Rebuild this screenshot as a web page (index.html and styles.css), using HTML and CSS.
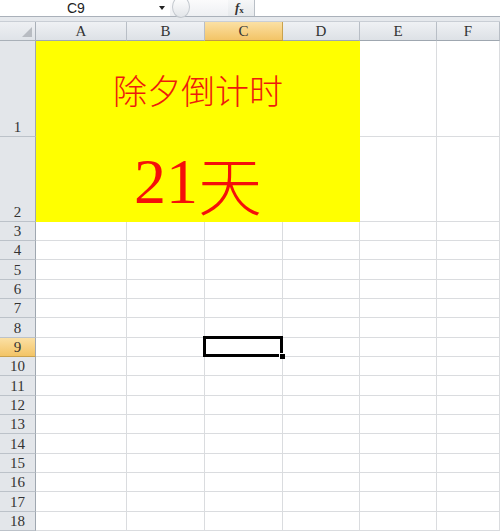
FILE: index.html
```html
<!DOCTYPE html>
<html lang="zh-CN">
<head>
    <meta charset="UTF-8">
    <title>除夕倒计时</title>
    <link rel="stylesheet" href="styles.css">
</head>
<body>
    <div class="formula-bar">
        <div class="name-box">
            <span class="name-text">C9</span>
            <span class="name-arrow"></span>
        </div>
        <div class="splitter"><span class="knob"></span></div>
        <div class="fx-btn"><i>f</i><sub>x</sub></div>
        <div class="formula-input"></div>
    </div>
    <div class="band"></div>

    <div class="sheet">
        <div class="row head-row">
            <div class="corner">
                <svg width="10" height="10" viewBox="0 0 10 10"><polygon points="10,0 10,10 0,10" fill="#b8bcc2"/></svg>
            </div>
            <div class="col-head">A</div>
            <div class="col-head">B</div>
            <div class="col-head active">C</div>
            <div class="col-head">D</div>
            <div class="col-head">E</div>
            <div class="col-head">F</div>
        </div>

        <div class="row row-1">
            <div class="row-head">1</div>
            <div class="merged title">除夕倒计时</div>
            <div class="cell"></div>
            <div class="cell"></div>
        </div>
        <div class="row row-2">
            <div class="row-head">2</div>
            <div class="merged days"><span class="num">21</span>天</div>
            <div class="cell"></div>
            <div class="cell"></div>
        </div>

        <div class="row r19"><div class="row-head">3</div><div class="cell"></div><div class="cell"></div><div class="cell"></div><div class="cell"></div><div class="cell"></div><div class="cell"></div></div>
        <div class="row r19"><div class="row-head">4</div><div class="cell"></div><div class="cell"></div><div class="cell"></div><div class="cell"></div><div class="cell"></div><div class="cell"></div></div>
        <div class="row r20"><div class="row-head">5</div><div class="cell"></div><div class="cell"></div><div class="cell"></div><div class="cell"></div><div class="cell"></div><div class="cell"></div></div>
        <div class="row r19"><div class="row-head">6</div><div class="cell"></div><div class="cell"></div><div class="cell"></div><div class="cell"></div><div class="cell"></div><div class="cell"></div></div>
        <div class="row r19"><div class="row-head">7</div><div class="cell"></div><div class="cell"></div><div class="cell"></div><div class="cell"></div><div class="cell"></div><div class="cell"></div></div>
        <div class="row r20"><div class="row-head">8</div><div class="cell"></div><div class="cell"></div><div class="cell"></div><div class="cell"></div><div class="cell"></div><div class="cell"></div></div>
        <div class="row r19"><div class="row-head active">9</div><div class="cell"></div><div class="cell"></div><div class="cell selected"><span class="handle"></span></div><div class="cell"></div><div class="cell"></div><div class="cell"></div></div>
        <div class="row r19"><div class="row-head">10</div><div class="cell"></div><div class="cell"></div><div class="cell"></div><div class="cell"></div><div class="cell"></div><div class="cell"></div></div>
        <div class="row r20"><div class="row-head">11</div><div class="cell"></div><div class="cell"></div><div class="cell"></div><div class="cell"></div><div class="cell"></div><div class="cell"></div></div>
        <div class="row r19"><div class="row-head">12</div><div class="cell"></div><div class="cell"></div><div class="cell"></div><div class="cell"></div><div class="cell"></div><div class="cell"></div></div>
        <div class="row r19"><div class="row-head">13</div><div class="cell"></div><div class="cell"></div><div class="cell"></div><div class="cell"></div><div class="cell"></div><div class="cell"></div></div>
        <div class="row r20"><div class="row-head">14</div><div class="cell"></div><div class="cell"></div><div class="cell"></div><div class="cell"></div><div class="cell"></div><div class="cell"></div></div>
        <div class="row r19"><div class="row-head">15</div><div class="cell"></div><div class="cell"></div><div class="cell"></div><div class="cell"></div><div class="cell"></div><div class="cell"></div></div>
        <div class="row r19"><div class="row-head">16</div><div class="cell"></div><div class="cell"></div><div class="cell"></div><div class="cell"></div><div class="cell"></div><div class="cell"></div></div>
        <div class="row r20"><div class="row-head">17</div><div class="cell"></div><div class="cell"></div><div class="cell"></div><div class="cell"></div><div class="cell"></div><div class="cell"></div></div>
        <div class="row r19"><div class="row-head">18</div><div class="cell"></div><div class="cell"></div><div class="cell"></div><div class="cell"></div><div class="cell"></div><div class="cell"></div></div>
    </div>
</body>
</html>
```

FILE: styles.css
```css
body {
    margin: 0;
    padding: 0;
    width: 500px;
    height: 532px;
    overflow: hidden;
    background-color: #fff;
    font-family: 'Liberation Serif', 'Noto Sans CJK SC', serif;
}

/* barra de fórmulas */
.formula-bar {
    display: flex;
    height: 16px;
    border-bottom: 1px solid #aab1ba;
    background-color: #fff;
}

.name-box {
    width: 170px;
    display: flex;
    align-items: center;
    position: relative;
}

.name-text {
    font-family: 'Liberation Sans', sans-serif;
    font-size: 14px;
    color: #222;
    margin-left: 67px;
    line-height: 16px;
}

.name-arrow {
    position: absolute;
    left: 159px;
    top: 6px;
    width: 0;
    height: 0;
    border-left: 3.5px solid transparent;
    border-right: 3.5px solid transparent;
    border-top: 4px solid #222;
}

.splitter {
    width: 58px;
    position: relative;
    background: linear-gradient(#fbfbfc, #eef0f3);
}

.knob {
    position: absolute;
    left: 2px;
    top: -4px;
    width: 16px;
    height: 20px;
    border-radius: 50%;
    border: 1px solid #c3c8ce;
    background: linear-gradient(#ffffff, #e2e5e9);
}

.fx-btn {
    width: 27px;
    background: linear-gradient(#f6f7f8, #e6e9ec);
    border-right: 1px solid #b9bfc6;
    font-family: 'Liberation Serif', serif;
    font-weight: bold;
    font-size: 13px;
    color: #333;
    line-height: 15px;
    padding-left: 7px;
    box-sizing: border-box;
}

.fx-btn sub {
    font-size: 9px;
    vertical-align: -1px;
}

.formula-input {
    flex: 1;
}

.band {
    height: 4px;
    background-color: #e6e9ed;
    border-bottom: 1px solid #c9ced5;
}

/* hoja */
.row {
    display: grid;
    grid-template-columns: 36px 91px 78px 78px 77px 77px 1fr;
    grid-template-rows: 100%;
}

.head-row {
    height: 19px;
}

.row-1 {
    height: 96px;
}

.row-2 {
    height: 85px;
}

.r19 {
    height: 19px;
}

.r20 {
    height: 20px;
}

.corner {
    background: linear-gradient(#eef0f3, #dfe3e8);
    border-right: 1px solid #a9b0b8;
    border-bottom: 1px solid #a9b0b8;
    box-sizing: border-box;
    display: flex;
    justify-content: flex-end;
    align-items: flex-end;
    padding: 0 3px 3px 0;
}

.col-head {
    background: linear-gradient(#eff1f4, #dde1e6);
    border-right: 1px solid #b8bec6;
    border-bottom: 1px solid #9fa7b0;
    box-sizing: border-box;
    text-align: center;
    font-size: 15px;
    line-height: 19px;
    color: #333;
}

.col-head.active {
    background: linear-gradient(#fbe0a4, #f3c466);
    border-right-color: #c9a24e;
    border-bottom-color: #c29a45;
}

.row-head {
    background-color: #e3e6ea;
    border-right: 1px solid #9fa7b0;
    border-bottom: 1px solid #bcc2c9;
    box-sizing: border-box;
    text-align: center;
    font-size: 15px;
    color: #333;
    display: flex;
    justify-content: center;
    align-items: flex-end;
    line-height: 18px;
}

.row-head.active {
    background: linear-gradient(#fbe0a4, #f3c466);
    border-bottom-color: #c9a24e;
}

.cell {
    border-right: 1px solid #dadcdf;
    border-bottom: 1px solid #dadcdf;
    box-sizing: border-box;
}

.merged {
    grid-column: span 4;
    background-color: #ffff00;
    display: flex;
    justify-content: center;
    align-items: center;
    color: #ee1a0c;
    min-height: 0;
    line-height: 1.2;
}

.title {
    font-family: 'Noto Sans CJK SC', sans-serif;
    font-weight: 300;
    font-size: 34px;
    padding-top: 2px;
    box-sizing: border-box;
}

.days {
    font-family: 'Noto Sans CJK SC', sans-serif;
    font-weight: 300;
    font-size: 64px;
    color: #f50f0a;
    padding-top: 6px;
    box-sizing: border-box;
}

.days .num {
    font-family: 'Liberation Serif', serif;
    font-weight: normal;
}

.selected {
    position: relative;
}

.selected::before {
    content: '';
    position: absolute;
    left: -2px;
    top: -2px;
    right: -1px;
    bottom: -1px;
    border: 3px solid #000;
}

.handle {
    position: absolute;
    right: -3px;
    bottom: -3px;
    width: 5px;
    height: 5px;
    background-color: #000;
    border-left: 1px solid #fff;
    border-top: 1px solid #fff;
    z-index: 1;
}
```
